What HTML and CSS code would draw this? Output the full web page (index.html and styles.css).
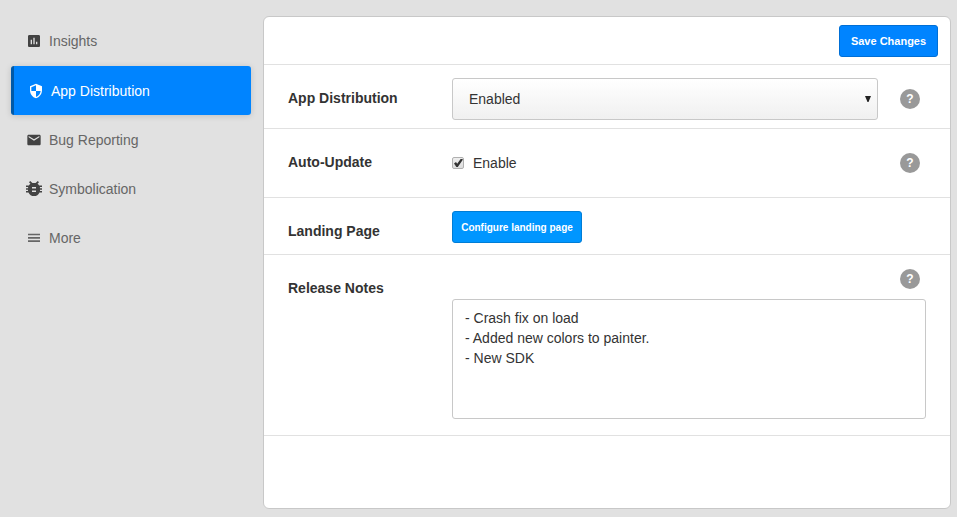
FILE: index.html
```html
<!DOCTYPE html>
<html lang="en">
<head>
<meta charset="utf-8">
<title>App Distribution</title>
<link rel="stylesheet" href="styles.css">
</head>
<body>
<div class="layout">
  <nav class="sidebar">
    <a class="item" href="#">
      <svg class="icon" viewBox="0 0 24 24"><path d="M19 3H5c-1.100 0-2 .9-2 2v14c0 1.100.9 2 2 2h14c1.100 0 2-.9 2-2V5c0-1.100-.9-2-2-2zM9 17H7v-7h2v7zm4 0h-2V7h2v10zm4 0h-2v-4h2v4z"/></svg>
      <span>Insights</span>
    </a>
    <a class="item active" href="#">
      <svg class="icon" viewBox="0 0 24 24"><path d="M12 1L3 5v6c0 5.550 3.840 10.740 9 12 5.160-1.260 9-6.450 9-12V5l-9-4zm0 10.990h7c-.53 4.120-3.280 7.790-7 8.940V12H5V6.300l7-3.110v8.800z"/></svg>
      <span>App Distribution</span>
    </a>
    <a class="item" href="#">
      <svg class="icon" viewBox="0 0 24 24"><path d="M20 4H4c-1.100 0-2 .9-2 2v12c0 1.100.9 2 2 2h16c1.100 0 2-.9 2-2V6c0-1.100-.9-2-2-2zm0 4l-8 5-8-5V6l8 5 8-5v2z"/></svg>
      <span>Bug Reporting</span>
    </a>
    <a class="item" href="#">
      <svg class="icon" viewBox="0 0 16 16"><path fill-rule="evenodd" d="M3 1.200L4.200 0l2.200 2.100a7 7 0 0 1 3.200 0L11.800 0 13 1.200l-1.500 1.600A6 6 0 0 1 13.200 4.500H16V6h-2.100v1.300H16v1.500h-2V10h2v1.500h-2.500a6 6 0 0 1-11 0H0V10h2V8.800H0V7.300h2.100V6H0V4.500h2.800a6 6 0 0 1 1.700-1.700zM6 6v1.500h4V6zM6 9.500V11h4V9.500z"/></svg>
      <span>Symbolication</span>
    </a>
    <a class="item" href="#">
      <svg class="icon light" viewBox="0 0 24 24"><path d="M3 18h18v-2.500H3V18zm0-5h18v-2.500H3V13zm0-7.500V8h18V5.500H3z"/></svg>
      <span>More</span>
    </a>
  </nav>

  <form class="panel">
    <div class="toolbar"><button class="button save" type="button">Save Changes</button></div>

    <div class="row">
      <label class="name" for="distribution">App Distribution</label>
      <div class="line">
        <div class="select-wrap">
          <select id="distribution" class="select"><option>Enabled</option><option>Disabled</option></select>
          <svg class="arrow" viewBox="0 0 6 6"><path d="M0 0h6L3.500 6h-1z"/></svg>
        </div>
        <button class="help" type="button" aria-label="Help">?</button>
      </div>
    </div>

    <div class="row">
      <span class="name">Auto-Update</span>
      <div class="line tall">
        <label class="check"><input type="checkbox" checked>Enable</label>
        <button class="help" type="button" aria-label="Help">?</button>
      </div>
    </div>

    <div class="row">
      <span class="name">Landing Page</span>
      <div class="line short"><button class="button configure" type="button">Configure landing page</button></div>
    </div>

    <div class="row">
      <label class="name" for="notes">Release Notes</label>
      <div class="notes-field">
        <button class="help" type="button" aria-label="Help">?</button>
        <textarea id="notes" class="notes" spellcheck="false">- Crash fix on load
- Added new colors to painter.
- New SDK</textarea>
      </div>
    </div>
  </form>
</div>
</body>
</html>
```
FILE: styles.css
```css
* {
  box-sizing: border-box;
}

body {
  margin: 0;
  background: #e1e1e1;
  color: #333;
  font: 14px/20px "Liberation Sans", Arial, sans-serif;
}

button,
select,
textarea {
  font-family: inherit;
}

.layout {
  display: flex;
  gap: 12px;
  min-height: 100vh;
  padding: 16px 6px 8px 11px;
}

.sidebar {
  flex: 0 0 240px;
}

.item {
  display: flex;
  align-items: center;
  gap: 7px;
  height: 49px;
  padding-left: 12px;
  border-left: 3px solid transparent;
  border-radius: 3px;
  color: #666;
  text-decoration: none;
}

.sidebar .item:first-child {
  margin-bottom: 1px;
}

.item.active {
  padding-left: 14px;
  border-left-color: #0059a8;
  background: #0084ff;
  background-clip: padding-box;
  color: #fff;
  box-shadow: 0 1px 6px rgba(0, 0, 0, 0.15);
}

.icon {
  width: 16px;
  height: 16px;
  fill: #424242;
}

.icon.light {
  fill: #666;
}

.active .icon {
  fill: #fff;
}

.panel {
  flex: 1;
  border: 1px solid #c8c8c8;
  border-radius: 6px;
  background: #fff;
}

.toolbar {
  display: flex;
  justify-content: flex-end;
  padding: 8px 12px 7px;
  border-bottom: 1px solid #e1e1e1;
}

.button {
  height: 32px;
  padding: 0 7px;
  border: 1px solid #0073d9;
  border-radius: 3px;
  color: #fff;
  font-weight: bold;
  white-space: nowrap;
}

.save {
  min-width: 99px;
  border-color: #006fd6;
  background: #0084ff;
  font-size: 11px;
}

.configure {
  min-width: 130px;
  border-color: #007dd6;
  background: #0096ff;
  font-size: 10px;
}

.row {
  display: grid;
  grid-template-columns: 164px 1fr;
  align-items: start;
  padding: 13px 24px 8px;
  border-bottom: 1px solid #e1e1e1;
}

.name {
  margin-top: 10px;
  font-weight: bold;
}

.line {
  display: flex;
  align-items: center;
  justify-content: space-between;
  gap: 22px;
  padding-right: 6px;
}

.tall {
  min-height: 47px;
  padding-bottom: 5px;
}

.short {
  align-items: flex-start;
  min-height: 35px;
}

.select-wrap {
  position: relative;
  flex: 1;
}

.select {
  display: block;
  width: 100%;
  height: 42px;
  padding: 0 16px;
  border: 1px solid #c8c8c8;
  border-radius: 3px;
  appearance: none;
  background: linear-gradient(#fff, #f0f0f0);
  color: #333;
  font-size: 14px;
}

.arrow {
  position: absolute;
  top: 18px;
  right: 7px;
  width: 6px;
  height: 6px;
  fill: #222;
}

.help {
  flex: none;
  width: 20px;
  height: 20px;
  padding: 0;
  border: 0;
  border-radius: 50%;
  background: #999;
  color: #fff;
  font-size: 12px;
  font-weight: bold;
  line-height: 20px;
}

.check {
  display: flex;
  align-items: center;
  gap: 9px;
}

.check input {
  display: grid;
  place-items: center;
  width: 12px;
  height: 12px;
  margin: 0;
  border: 1px solid #b0b0b0;
  border-radius: 2px;
  appearance: none;
  background: linear-gradient(#eee, #ddd);
}

.check input:checked::before {
  content: "";
  width: 10px;
  height: 9px;
  background: #333;
  clip-path: polygon(10% 55%, 30% 40%, 42% 58%, 80% 0, 100% 12%, 48% 95%, 34% 95%);
}

.notes-field {
  display: flex;
  flex-direction: column;
  gap: 10px;
  padding: 1px 0 8px;
}

.notes-field .help {
  align-self: flex-end;
  margin-right: 6px;
}

.notes {
  display: block;
  width: 100%;
  height: 120px;
  padding: 8px 12px;
  border: 1px solid #c8c8c8;
  border-radius: 3px;
  background: #fff;
  color: #333;
  font-size: 14px;
  line-height: 20px;
  resize: none;
}
```
